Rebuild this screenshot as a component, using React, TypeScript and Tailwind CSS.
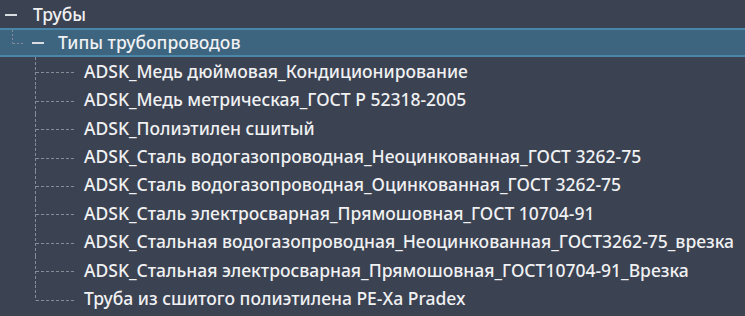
import React from "react";

const items = [
  "ADSK_Медь дюймовая_Кондиционирование",
  "ADSK_Медь метрическая_ГОСТ Р 52318-2005",
  "ADSK_Полиэтилен сшитый",
  "ADSK_Сталь водогазопроводная_Неоцинкованная_ГОСТ 3262-75",
  "ADSK_Сталь водогазопроводная_Оцинкованная_ГОСТ 3262-75",
  "ADSK_Сталь электросварная_Прямошовная_ГОСТ 10704-91",
  "ADSK_Стальная водогазопроводная_Неоцинкованная_ГОСТ3262-75_врезка",
  "ADSK_Стальная электросварная_Прямошовная_ГОСТ10704-91_Врезка",
  "Труба из сшитого полиэтилена PE-Xa Pradex",
];

const DASH = "#878c96";

function Minus() {
  return <div className="h-[2px] w-[12px] bg-[#d9dce0]" />;
}

function Connector({ last }: { last: boolean }) {
  return (
    <svg width="84" height="28.4" className="shrink-0 block">
      <line x1="35.5" y1="0" x2="35.5" y2={last ? 15.5 : 28.4} stroke={DASH} strokeWidth="1" strokeDasharray="3 2" />
      <line x1="36" y1="15.5" x2="76" y2="15.5" stroke={DASH} strokeWidth="1" strokeDasharray="3 2" />
    </svg>
  );
}

export default function App() {
  return (
    <div
      className="w-[745px] h-[316px] bg-[#3b4251] text-[#f0f1f3] text-[17.5px] font-medium overflow-hidden pt-px"
      style={{ fontFamily: '"Noto Sans", "Open Sans", sans-serif' }}
    >
      <div className="flex items-center h-[27.4px]">
        <div className="w-[33px] pl-[5px] flex items-center">
          <Minus />
        </div>
        <span className="leading-none">Трубы</span>
      </div>
      <div className="flex items-center h-[29px] bg-[#3e6580] border-y-2 border-[#4a86a8]">
        <svg width="32" height="25" className="shrink-0 block">
          <line x1="12.5" y1="0" x2="12.5" y2="13.5" stroke={DASH} strokeWidth="1" strokeDasharray="2 2" />
          <line x1="13" y1="13.5" x2="24" y2="13.5" stroke={DASH} strokeWidth="1" strokeDasharray="2 2" />
        </svg>
        <div className="w-[26px] flex items-center">
          <Minus />
        </div>
        <span className="leading-none">Типы трубопроводов</span>
      </div>
      {items.map((t, i) => (
        <div key={t} className="flex items-center h-[28.4px]">
          <Connector last={i === items.length - 1} />
          <span className="leading-none whitespace-nowrap">{t}</span>
        </div>
      ))}
    </div>
  );
}
